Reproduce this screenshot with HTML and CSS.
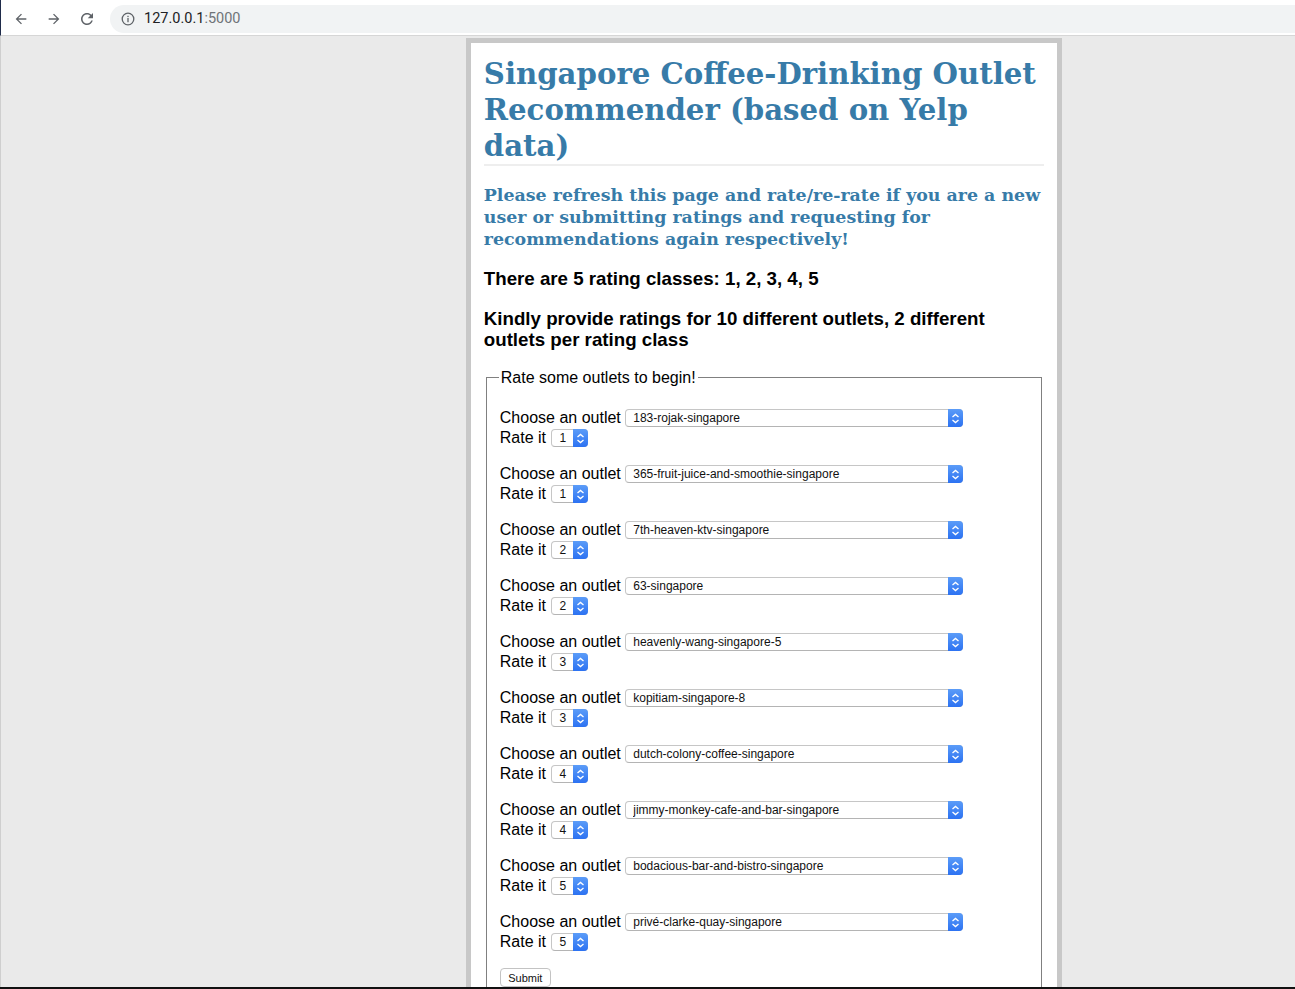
FILE: index.html
```html
<!DOCTYPE html>
<html lang="en">
    <head>
        <meta charset="UTF-8">
        <title>Singapore Coffee-Drinking Outlet Recommender</title>
        <link rel="stylesheet" href="styles.css">
    </head>
    <body>
        <div class="chrome">
            <div class="nav">
                <span class="nav-btn">
                    <svg width="16" height="16" viewBox="0 0 24 24"><path d="M20 11H7.83l5.59-5.59L12 4l-8 8 8 8 1.41-1.41L7.83 13H20v-2z"/></svg>
                </span>
                <span class="nav-btn">
                    <svg width="16" height="16" viewBox="0 0 24 24"><path d="M4 11h12.17l-5.59-5.59L12 4l8 8-8 8-1.41-1.41L16.17 13H4v-2z"/></svg>
                </span>
                <span class="nav-btn">
                    <svg width="18" height="18" viewBox="0 0 24 24"><path d="M17.65 6.35C16.2 4.9 14.21 4 12 4c-4.42 0-7.99 3.58-7.99 8s3.57 8 7.99 8c3.73 0 6.84-2.55 7.730-6h-2.08c-.82 2.33-3.04 4-5.65 4-3.31 0-6-2.69-6-6s2.69-6 6-6c1.66 0 3.14.69 4.22 1.78L13 11h7V4l-2.35 2.35z"/></svg>
                </span>
            </div>
            <div class="omnibox">
                <svg class="info" width="14" height="14" viewBox="0 0 14 14">
                    <circle cx="7" cy="7" r="5.8" fill="none" stroke="#5f6368" stroke-width="1.3"/>
                    <rect x="6.35" y="6" width="1.3" height="4.2" fill="#5f6368"/>
                    <rect x="6.35" y="3.8" width="1.3" height="1.3" fill="#5f6368"/>
                </svg>
                <span class="host">127.0.0.1</span><span class="port">:5000</span>
            </div>
        </div>

        <div class="viewport">
            <div class="page">
                <h1>Singapore Coffee-Drinking Outlet Recommender (based on Yelp data)</h1>
                <h2>Please refresh this page and rate/re-rate if you are a new user or submitting ratings and requesting for recommendations again respectively!</h2>
                <h3>There are 5 rating classes: 1, 2, 3, 4, 5</h3>
                <h3>Kindly provide ratings for 10 different outlets, 2 different outlets per rating class</h3>

                <form method="post">
                    <fieldset>
                        <legend>Rate some outlets to begin!</legend>
                        <p>
                            Choose an outlet <span class="select outlet"><select name="outlet1"><option>183-rojak-singapore</option></select><span class="arrows"><svg width="9" height="11" viewBox="0 0 9 11"><path d="M1.5 4l3-2.6 3 2.6M1.5 7l3 2.6 3-2.6"/></svg></span></span><br>
                            Rate it <span class="select rate"><select name="rating1"><option selected>1</option><option>2</option><option>3</option><option>4</option><option>5</option></select><span class="arrows"><svg width="9" height="11" viewBox="0 0 9 11"><path d="M1.5 4l3-2.6 3 2.6M1.5 7l3 2.6 3-2.6"/></svg></span></span>
                        </p>
                        <p>
                            Choose an outlet <span class="select outlet"><select name="outlet2"><option>365-fruit-juice-and-smoothie-singapore</option></select><span class="arrows"><svg width="9" height="11" viewBox="0 0 9 11"><path d="M1.5 4l3-2.6 3 2.6M1.5 7l3 2.6 3-2.6"/></svg></span></span><br>
                            Rate it <span class="select rate"><select name="rating2"><option selected>1</option><option>2</option><option>3</option><option>4</option><option>5</option></select><span class="arrows"><svg width="9" height="11" viewBox="0 0 9 11"><path d="M1.5 4l3-2.6 3 2.6M1.5 7l3 2.6 3-2.6"/></svg></span></span>
                        </p>
                        <p>
                            Choose an outlet <span class="select outlet"><select name="outlet3"><option>7th-heaven-ktv-singapore</option></select><span class="arrows"><svg width="9" height="11" viewBox="0 0 9 11"><path d="M1.5 4l3-2.6 3 2.6M1.5 7l3 2.6 3-2.6"/></svg></span></span><br>
                            Rate it <span class="select rate"><select name="rating3"><option>1</option><option selected>2</option><option>3</option><option>4</option><option>5</option></select><span class="arrows"><svg width="9" height="11" viewBox="0 0 9 11"><path d="M1.5 4l3-2.6 3 2.6M1.5 7l3 2.6 3-2.6"/></svg></span></span>
                        </p>
                        <p>
                            Choose an outlet <span class="select outlet"><select name="outlet4"><option>63-singapore</option></select><span class="arrows"><svg width="9" height="11" viewBox="0 0 9 11"><path d="M1.5 4l3-2.6 3 2.6M1.5 7l3 2.6 3-2.6"/></svg></span></span><br>
                            Rate it <span class="select rate"><select name="rating4"><option>1</option><option selected>2</option><option>3</option><option>4</option><option>5</option></select><span class="arrows"><svg width="9" height="11" viewBox="0 0 9 11"><path d="M1.5 4l3-2.6 3 2.6M1.5 7l3 2.6 3-2.6"/></svg></span></span>
                        </p>
                        <p>
                            Choose an outlet <span class="select outlet"><select name="outlet5"><option>heavenly-wang-singapore-5</option></select><span class="arrows"><svg width="9" height="11" viewBox="0 0 9 11"><path d="M1.5 4l3-2.6 3 2.6M1.5 7l3 2.6 3-2.6"/></svg></span></span><br>
                            Rate it <span class="select rate"><select name="rating5"><option>1</option><option>2</option><option selected>3</option><option>4</option><option>5</option></select><span class="arrows"><svg width="9" height="11" viewBox="0 0 9 11"><path d="M1.5 4l3-2.6 3 2.6M1.5 7l3 2.6 3-2.6"/></svg></span></span>
                        </p>
                        <p>
                            Choose an outlet <span class="select outlet"><select name="outlet6"><option>kopitiam-singapore-8</option></select><span class="arrows"><svg width="9" height="11" viewBox="0 0 9 11"><path d="M1.5 4l3-2.6 3 2.6M1.5 7l3 2.6 3-2.6"/></svg></span></span><br>
                            Rate it <span class="select rate"><select name="rating6"><option>1</option><option>2</option><option selected>3</option><option>4</option><option>5</option></select><span class="arrows"><svg width="9" height="11" viewBox="0 0 9 11"><path d="M1.5 4l3-2.6 3 2.6M1.5 7l3 2.6 3-2.6"/></svg></span></span>
                        </p>
                        <p>
                            Choose an outlet <span class="select outlet"><select name="outlet7"><option>dutch-colony-coffee-singapore</option></select><span class="arrows"><svg width="9" height="11" viewBox="0 0 9 11"><path d="M1.5 4l3-2.6 3 2.6M1.5 7l3 2.6 3-2.6"/></svg></span></span><br>
                            Rate it <span class="select rate"><select name="rating7"><option>1</option><option>2</option><option>3</option><option selected>4</option><option>5</option></select><span class="arrows"><svg width="9" height="11" viewBox="0 0 9 11"><path d="M1.5 4l3-2.6 3 2.6M1.5 7l3 2.6 3-2.6"/></svg></span></span>
                        </p>
                        <p>
                            Choose an outlet <span class="select outlet"><select name="outlet8"><option>jimmy-monkey-cafe-and-bar-singapore</option></select><span class="arrows"><svg width="9" height="11" viewBox="0 0 9 11"><path d="M1.5 4l3-2.6 3 2.6M1.5 7l3 2.6 3-2.6"/></svg></span></span><br>
                            Rate it <span class="select rate"><select name="rating8"><option>1</option><option>2</option><option>3</option><option selected>4</option><option>5</option></select><span class="arrows"><svg width="9" height="11" viewBox="0 0 9 11"><path d="M1.5 4l3-2.6 3 2.6M1.5 7l3 2.6 3-2.6"/></svg></span></span>
                        </p>
                        <p>
                            Choose an outlet <span class="select outlet"><select name="outlet9"><option>bodacious-bar-and-bistro-singapore</option></select><span class="arrows"><svg width="9" height="11" viewBox="0 0 9 11"><path d="M1.5 4l3-2.6 3 2.6M1.5 7l3 2.6 3-2.6"/></svg></span></span><br>
                            Rate it <span class="select rate"><select name="rating9"><option>1</option><option>2</option><option>3</option><option>4</option><option selected>5</option></select><span class="arrows"><svg width="9" height="11" viewBox="0 0 9 11"><path d="M1.5 4l3-2.6 3 2.6M1.5 7l3 2.6 3-2.6"/></svg></span></span>
                        </p>
                        <p>
                            Choose an outlet <span class="select outlet"><select name="outlet10"><option>privé-clarke-quay-singapore</option></select><span class="arrows"><svg width="9" height="11" viewBox="0 0 9 11"><path d="M1.5 4l3-2.6 3 2.6M1.5 7l3 2.6 3-2.6"/></svg></span></span><br>
                            Rate it <span class="select rate"><select name="rating10"><option>1</option><option>2</option><option>3</option><option>4</option><option selected>5</option></select><span class="arrows"><svg width="9" height="11" viewBox="0 0 9 11"><path d="M1.5 4l3-2.6 3 2.6M1.5 7l3 2.6 3-2.6"/></svg></span></span>
                        </p>
                        <button type="submit" class="submit">Submit</button>
                    </fieldset>
                </form>
            </div>
        </div>
        <div class="frame-edge"></div>
    </body>
</html>
```

FILE: styles.css
```css
*{
    box-sizing: border-box;
}
html,body{
    margin: 0;
    padding: 0;
}
body{
    height: 989px;
    overflow: hidden;
    display: flex;
    flex-direction: column;
    font-family: "Liberation Sans", Arial, sans-serif;
    background: #eaeaea;
}

/* browser toolbar */
.chrome{
    height: 36px;
    flex: none;
    display: flex;
    align-items: center;
    background: #fff;
    border-bottom: 1px solid #d6d6d6;
    border-left: 1px solid #1f2b4a;
    padding-top: 2px;
}
.nav{
    display: flex;
    padding-left: 3px;
}
.nav-btn{
    width: 33px;
    height: 24px;
    display: flex;
    align-items: center;
    justify-content: center;
}
.nav-btn svg{
    fill: #5f6368;
}
.omnibox{
    flex: 1;
    height: 28px;
    margin-left: 7px;
    margin-right: -20px;
    border-radius: 14px;
    background: #f1f3f4;
    display: flex;
    align-items: center;
    padding-left: 11px;
    font-family: Roboto, "Liberation Sans", sans-serif;
    font-size: 14.5px;
}
.omnibox .info{
    margin-right: 9px;
}
.host{
    color: #202124;
}
.port{
    color: #6f7378;
}

/* page */
.viewport{
    flex: 1;
    min-height: 0;
    overflow: hidden;
    border-left: 1px solid #cfcfcf;
}
.page{
    width: 35em;
    margin: 2px 0 0 465px;
    border: 5px solid #c8c8c8;
    padding: 0.8em;
    background: #fff;
    box-sizing: content-box;
}
h1,h2{
    font-family: "DejaVu Serif", Georgia, serif;
    color: #377ba8;
    margin: 0;
}
h1{
    font-size: 29.2px;
    line-height: 36px;
    border-bottom: 2px solid #eee;
}
h2{
    font-size: 17.4px;
    line-height: 22px;
    margin-top: 18px;
}
h3{
    font-size: 1.17em;
    line-height: 21px;
    margin: 18.7px 0;
}
fieldset{
    margin: 0 2px;
    padding: 0.35em 0.75em 0.625em 13px;
    border: 1px solid #808080;
}
legend{
    padding: 0 2px;
    margin-left: -1px;
    line-height: 18px;
}
fieldset p{
    margin: 16px 0;
    line-height: 20px;
}

/* mac-like selects */
.select{
    position: relative;
    display: inline-block;
    height: 18px;
    vertical-align: top;
    margin-top: 1px;
}
.select.outlet{
    width: 338px;
}
.select.rate{
    width: 37px;
    margin-left: 1px;
}
.select select{
    -webkit-appearance: none;
    appearance: none;
    display: block;
    width: 100%;
    height: 18px;
    margin: 0;
    padding: 0 18px 0 7px;
    border: 1px solid #c6c6c6;
    border-bottom-color: #b4b4b4;
    border-radius: 4px;
    background: #fff;
    font-family: "Liberation Sans", Arial, sans-serif;
    font-size: 12px;
    color: #111;
}
.arrows{
    position: absolute;
    top: 0;
    right: 0;
    width: 15px;
    height: 18px;
    border-radius: 0 4px 4px 0;
    background: linear-gradient(#5b9cf8, #2c72f2);
    display: flex;
    align-items: center;
    justify-content: center;
    pointer-events: none;
}
.arrows path{
    fill: none;
    stroke: #fff;
    stroke-width: 1.3;
}
.submit{
    display: block;
    height: 19px;
    width: 51px;
    margin: 0;
    padding: 0;
    border: 1px solid #c3c3c3;
    border-radius: 4px;
    background: #fff;
    font-family: "Liberation Sans", Arial, sans-serif;
    font-size: 11px;
    color: #111;
}

.frame-edge{
    flex: none;
    height: 2px;
    background: #111;
}
```
